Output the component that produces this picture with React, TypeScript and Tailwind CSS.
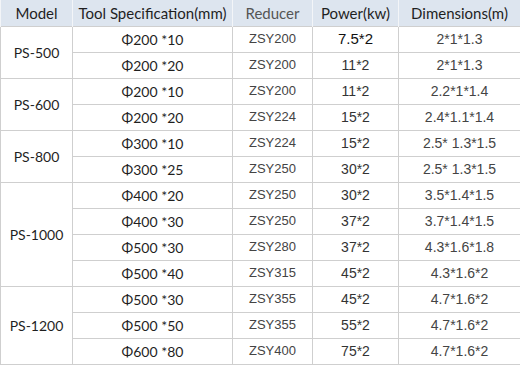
const rows: [string | null, number, string, string, string, string][] = [
  ["PS-500", 2, "Φ200 *10", "ZSY200", "7.5*2", "2*1*1.3"],
  [null, 0, "Φ200 *20", "ZSY200", "11*2", "2*1*1.3"],
  ["PS-600", 2, "Φ200 *10", "ZSY200", "11*2", "2.2*1*1.4"],
  [null, 0, "Φ200 *20", "ZSY224", "15*2", "2.4*1.1*1.4"],
  ["PS-800", 2, "Φ300 *10", "ZSY224", "15*2", "2.5* 1.3*1.5"],
  [null, 0, "Φ300 *25", "ZSY250", "30*2", "2.5* 1.3*1.5"],
  ["PS-1000", 4, "Φ400 *20", "ZSY250", "30*2", "3.5*1.4*1.5"],
  [null, 0, "Φ400 *30", "ZSY250", "37*2", "3.7*1.4*1.5"],
  [null, 0, "Φ500 *30", "ZSY280", "37*2", "4.3*1.6*1.8"],
  [null, 0, "Φ500 *40", "ZSY315", "45*2", "4.3*1.6*2"],
  ["PS-1200", 3, "Φ500 *30", "ZSY355", "45*2", "4.7*1.6*2"],
  [null, 0, "Φ500 *50", "ZSY355", "55*2", "4.7*1.6*2"],
  [null, 0, "Φ600 *80", "ZSY400", "75*2", "4.7*1.6*2"],
];

const calibri = "font-['Lato','Open_Sans',sans-serif]";
const arial = "font-['Liberation_Sans',Arial,sans-serif]";

export default function App() {
  return (
    <div className="w-[520px] h-[366px] bg-white overflow-hidden">
      <table className="table-fixed border-collapse w-[520px] text-center">
        <colgroup>
          <col className="w-[72px]" />
          <col className="w-[160px]" />
          <col className="w-[80px]" />
          <col className="w-[86px]" />
          <col className="w-[122px]" />
        </colgroup>
        <thead>
          <tr className={`h-[26px] bg-[#dde5ef] text-[15px] text-[#1f1f1f] ${calibri}`}>
            <th className="font-normal border-x border-[#f3f5f8]">Model</th>
            <th className="font-normal border-x border-[#f3f5f8]">Tool Specification(mm)</th>
            <th className="font-normal border-x border-[#f3f5f8] text-[#555]">Reducer</th>
            <th className="font-normal border-x border-[#f3f5f8]">Power(kw)</th>
            <th className="font-normal border-x border-[#f3f5f8]">Dimensions(m)</th>
          </tr>
        </thead>
        <tbody>
          {rows.map(([model, span, tool, reducer, power, dims], i) => (
            <tr key={i} className="h-[26px]">
              {model && (
                <td rowSpan={span} className={`border border-[#cfcfcf] text-[14px] text-[#1f1f1f] ${calibri}`}>
                  {model}
                </td>
              )}
              <td className={`border border-[#cfcfcf] text-[14px] text-[#1f1f1f] ${calibri}`}>{tool}</td>
              <td className={`border border-[#cfcfcf] text-[13px] text-[#444] ${arial}`}>{reducer}</td>
              <td
                className={`border border-[#cfcfcf] ${arial} ${
                  i === 0 ? "text-[15px] text-[#111]" : "text-[14px] text-[#333]"
                }`}
              >
                {power}
              </td>
              <td className={`border border-[#cfcfcf] text-[14px] text-[#444] ${arial}`}>{dims}</td>
            </tr>
          ))}
        </tbody>
      </table>
    </div>
  );
}
